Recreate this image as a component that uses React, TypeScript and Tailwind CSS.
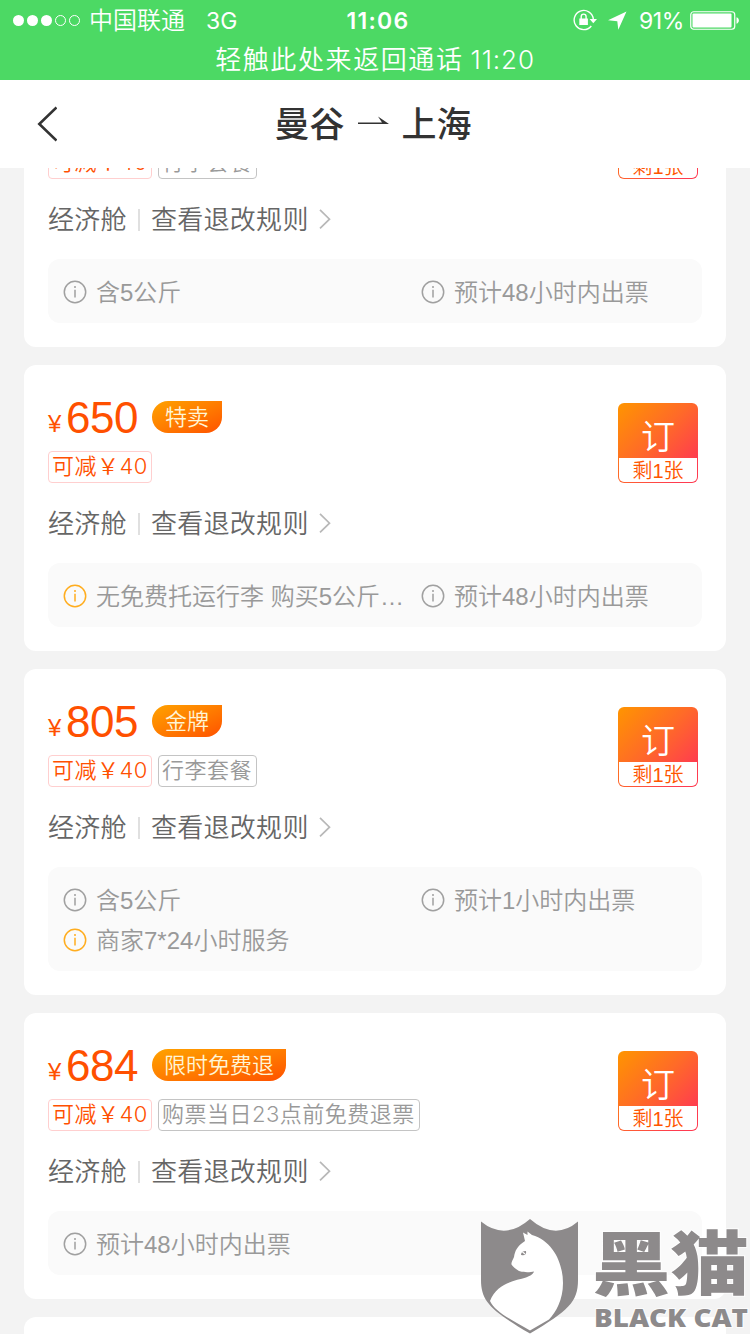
import clsx from 'clsx';

type Note = {
  text: string;
  warn?: boolean;
};

type Ticket = {
  id: number;
  price: number;
  badge?: string;
  tag?: string;
  notes: Note[];
};

const tickets: Ticket[] = [
  { id: 1, price: 640, tag: '行李套餐', notes: [{ text: '含5公斤' }, { text: '预计48小时内出票' }] },
  {
    id: 2,
    price: 650,
    badge: '特卖',
    notes: [{ text: '无免费托运行李 购买5公斤…', warn: true }, { text: '预计48小时内出票' }],
  },
  {
    id: 3,
    price: 805,
    badge: '金牌',
    tag: '行李套餐',
    notes: [{ text: '含5公斤' }, { text: '预计1小时内出票' }, { text: '商家7*24小时服务', warn: true }],
  },
  {
    id: 4,
    price: 684,
    badge: '限时免费退',
    tag: '购票当日23点前免费退票',
    notes: [{ text: '预计48小时内出票' }],
  },
];

function InfoIcon({ warn }: { warn?: boolean }) {
  return (
    <svg
      viewBox="0 0 24 24"
      className={clsx('w-6 h-6 shrink-0', warn ? 'text-[#ffad1f]' : 'text-[#a0a0a0]')}
      fill="none"
      stroke="currentColor"
      strokeWidth="1.5"
    >
      <circle cx="12" cy="12" r="10.7" />
      <path d="M12 9.8v7.6M12 6v2" />
    </svg>
  );
}

function StatusBar() {
  return (
    <div className="h-20 bg-[#4cd964] text-white font-['Inter','Noto_Sans_CJK_SC',sans-serif]">
      <div className="h-10 grid grid-cols-[1fr_auto_1fr] items-center pl-3 pr-2.5">
        <div className="flex items-center">
          <svg width="69" height="14" viewBox="0 0 69 14" fill="none" stroke="#fff">
            <circle cx="6.5" cy="7.5" r="5.5" fill="#fff" stroke="none" />
            <circle cx="20.5" cy="7.5" r="5.5" fill="#fff" stroke="none" />
            <circle cx="34.5" cy="7.5" r="5.5" fill="#fff" stroke="none" />
            <circle cx="48.5" cy="7.5" r="5" />
            <circle cx="62.5" cy="7.5" r="5" />
          </svg>
          <span className="ml-2 pt-0.5 text-2xl leading-[38px] font-[350]">中国联通</span>
          <span className="ml-[21px] pt-0.5 text-[23px] leading-[38px]">3G</span>
        </div>
        <span className="pt-0.5 pl-1 text-[23px] leading-[38px] font-semibold tracking-[1.3px]">11:06</span>
        <div className="flex items-center justify-end">
          <svg width="24" height="22" viewBox="0 0 24 22" fill="none" stroke="#fff" strokeWidth="1.4">
            <path d="M18.300 17A9.600 9.600 0 1 1 20.300 10" />
            <path d="M16.600 10h7.400l-3.700 4.300z" fill="#fff" stroke="none" />
            <rect x="6.300" y="9.500" width="8.600" height="6.500" fill="#fff" stroke="none" />
            <path d="M8.200 10V7.600a2.450 2.450 0 0 1 4.900 0V10" />
          </svg>
          <svg className="ml-[11px]" width="19" height="19" viewBox="0 0 19 19" fill="#fff">
            <path d="M18.500 0.500L0 9.200l9.300 1 1 8.500z" />
          </svg>
          <span className="ml-3 pt-0.5 text-[23px] leading-[38px] tracking-[-0.4px]">91%</span>
          <svg className="ml-1.5" width="50" height="19" viewBox="0 0 50 19" fill="none">
            <rect x="0.75" y="0.75" width="44" height="17.5" rx="3" stroke="#fff" strokeWidth="1.2" />
            <rect x="2.5" y="2.5" width="39" height="14" rx="1" fill="#fff" />
            <path d="M46.500 6.300c3.200 1 3.200 5.400 0 6.400z" fill="#fff" />
          </svg>
        </div>
      </div>
      <p className="h-10 flex justify-center gap-[7px] text-[26px] leading-[39px] font-[350]">
        <span className="tracking-[1.600px]">轻触此处来返回通话</span>
        <span className="tracking-[0.9px]">11:20</span>
      </p>
    </div>
  );
}

function BookButton() {
  return (
    <button className="w-20 h-20 p-px pt-0 flex flex-col rounded-md bg-[linear-gradient(135deg,#ff9500_0%,#ff6a28_45%,#ff3b50_85%)]">
      <span className="h-[55px] w-full pt-2 text-center text-[34px] leading-[52px] text-white font-[350]">订</span>
      <span className="h-6 w-full pt-px rounded-b-[5px] bg-white text-center text-xl leading-[25px] text-[#ff5500] font-[350]">
        剩1张
      </span>
    </button>
  );
}

function TicketCard({ ticket }: { ticket: Ticket }) {
  return (
    <div className="shrink-0 rounded-xl bg-white px-6 pt-[30px] pb-6 font-[350]">
      <div className="flex justify-between">
        <div>
          <div className="flex items-center h-11 text-[#ff5000]">
            <span className="w-[18px] pt-3.5 text-2xl leading-8">¥</span>
            <span className="pt-0.5 text-[44px] leading-[44px] tracking-[-0.5px]">{ticket.price}</span>
            {ticket.badge && (
              <span className="ml-[14px] h-8 min-w-[70px] px-3 text-center rounded-l-full rounded-br-full bg-linear-to-br from-[#ffa200] to-[#ff5000] text-[22px] leading-[34px] text-[#fff5d6]">
                {ticket.badge}
              </span>
            )}
          </div>
          <div className="mt-3 flex gap-1.5 text-[22px] leading-[29px] tracking-[0.500px] font-['Inter','Noto_Sans_CJK_SC',sans-serif]">
            <span className="w-[104px] h-8 pl-[3px] whitespace-nowrap border border-[#ffcfcf] rounded text-[#ff5000]">
              可减￥40
            </span>
            {ticket.tag && (
              <span className="h-8 pl-[3px] pr-1 border border-[#c4c4c4] rounded text-[#999]">{ticket.tag}</span>
            )}
          </div>
        </div>
        <div className="pt-2 pr-1">
          <BookButton />
        </div>
      </div>

      <div className="mt-5 h-10 flex items-center text-[26px] text-[#666]">
        <span className="pt-0.5 leading-[38px] tracking-[0.3px]">经济舱</span>
        <span className="ml-[11px] mr-[11px] mt-0.5 w-0.5 h-[22px] bg-[#e0e0e0]"></span>
        <span className="pt-0.5 leading-[38px] tracking-[0.3px]">查看退改规则</span>
        <svg className="ml-2.5" width="12" height="20" viewBox="0 0 12 20" fill="none" stroke="#b8b8b8" strokeWidth="1.7">
          <path d="M1 0.800l9.500 9.400L1 19.400" />
        </svg>
      </div>

      <div className="mt-5 grid grid-cols-[342px_1fr] gap-x-4 rounded-xl bg-[#fafafa] pt-[13px] pb-[11px] pl-[15px] text-2xl text-[#999]">
        {ticket.notes.map((note) => (
          <div key={note.text} className="flex items-center h-10 whitespace-nowrap">
            <InfoIcon warn={note.warn} />
            <span className="ml-[9px] pt-0.5 leading-[38px]">{note.text}</span>
          </div>
        ))}
      </div>
    </div>
  );
}

function Watermark() {
  return (
    <svg className="absolute right-0 bottom-0" width="272" height="118" viewBox="478 1216 272 118">
      <path
        d="M481 1221.500Q505 1241 530 1219Q555 1241 578 1221.500V1280C578 1302 568 1311 530 1333.500C492 1311 481 1302 481 1280Z"
        fill="#8d8a8b"
      />
      <path
        d="M490 1301C497 1283 514 1281 526 1277.500C531 1275.500 533 1274 534 1271.500C530 1272.500 523 1272.500 519 1271C516 1269 513 1267 511.500 1264.500C511 1262 513 1260 514 1257C515 1251 517 1246 525 1241L523 1232.500L527.500 1235L527.500 1231.500L532 1235C553 1241 563 1263 563 1283C563 1300 556 1312 549 1319.500L530 1330.500C506 1317 495 1311 490 1301Z"
        fill="#fff"
      />
      <path d="M521 1255q0-4 5-4q1 5-5 4z" fill="#8d8a8b" />
      <path d="M522.500 1252l2.500 2" stroke="#fff" strokeWidth="1.3" />
      <g fill="#8d8a8b" stroke="#fff" strokeOpacity="0.7" strokeWidth="2" paintOrder="stroke">
        <text
          x="592"
          y="1290"
          textLength="157"
          lengthAdjust="spacingAndGlyphs"
          className="font-['Noto_Sans_CJK_SC',sans-serif] font-black text-[70px]"
        >
          黑猫
        </text>
        <text
          x="594"
          y="1327"
          textLength="154"
          lengthAdjust="spacingAndGlyphs"
          className="font-['Open_Sans',sans-serif] font-extrabold text-2xl"
        >
          BLACK CAT
        </text>
      </g>
    </svg>
  );
}

export default function App() {
  return (
    <div className="relative w-[750px] h-[1334px] flex flex-col overflow-hidden bg-[#f3f3f3] font-['Liberation_Sans','Noto_Sans_CJK_SC',sans-serif]">
      <StatusBar />

      <header className="h-[88px] shrink-0 grid grid-cols-[1fr_auto_1fr] items-center bg-white text-[#333]">
        <button className="ml-[37px] w-5">
          <svg width="20" height="36" viewBox="0 0 20 36" fill="none" stroke="#333" strokeWidth="2.6">
            <path d="M19.500 1.500L2.300 18L19.500 34.500" />
          </svg>
        </button>
        <h1 className="flex items-center pt-0.5 pr-1 text-[35px] leading-[86px] font-medium">
          曼谷
          <svg className="mx-[13px] -mt-2" width="31" height="12" viewBox="0 0 31 12" fill="#333">
            <path d="M0 7.500h24L20 1.500L31 9H0z" />
          </svg>
          上海
        </h1>
      </header>

      <main className="flex-1 min-h-0 overflow-hidden px-6">
        <div className="-mt-[107px] flex flex-col gap-[18px]">
          {tickets.map((ticket) => (
            <TicketCard key={ticket.id} ticket={ticket} />
          ))}
          <div className="h-24 rounded-xl bg-white"></div>
        </div>
      </main>

      <Watermark />
    </div>
  );
}
